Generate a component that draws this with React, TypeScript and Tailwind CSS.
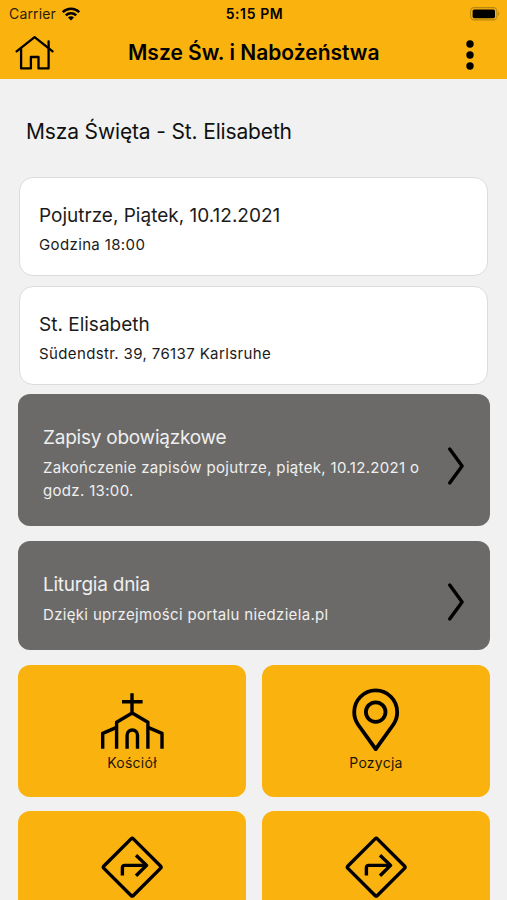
import type { ReactNode } from "react"

function WifiIcon() {
  return (
    <svg width="18" height="14" viewBox="0 0 18 14" fill="none" stroke="#000" strokeWidth="2.5">
      <path d="M.8 5.2a11.6 11.6 0 0 1 16.4 0" />
      <path d="M3.8 8.4a7.4 7.4 0 0 1 10.4 0" />
      <path d="M9 13.4 6 10.5a4.2 4.2 0 0 1 6 0Z" fill="#000" stroke="none" />
    </svg>
  )
}

function BatteryIcon() {
  return (
    <svg width="30" height="14" viewBox="0 0 30 14">
      <rect x="0.6" y="0.6" width="26.3" height="12.3" rx="3.6" fill="none" stroke="#b88813" strokeWidth="1.1" />
      <rect x="2.6" y="2.4" width="22.4" height="8.8" rx="1.6" fill="#000" />
      <path d="M28.1 4.6c1.6.8 1.6 3.6 0 4.4Z" fill="#b88813" />
    </svg>
  )
}

function HomeIcon() {
  return (
    <svg
      width="40"
      height="36"
      viewBox="0 0 40 36"
      fill="none"
      stroke="#000"
      strokeWidth="2.3"
      strokeLinecap="round"
      strokeLinejoin="round"
    >
      <path d="M2.6 16.3 20.6 2.2l18 14.1" />
      <path d="M7.1 13.6v19.8h9.8V22h7.6v11.4h10.1V6.3" />
    </svg>
  )
}

function ChurchIcon() {
  return (
    <svg width="64" height="58" viewBox="0 0 64 58" fill="none" stroke="#000" strokeWidth="3.4" strokeLinejoin="round">
      <path d="M32 2.2v20M22 10.7h20.6" />
      <path d="M16.6 57.7V31.2L32.2 22l15.7 9.2v26.5" />
      <path d="M2.7 57.7V42.4l13.9-6M62 57.7V42.4l-14.1-6" />
      <path d="M27.1 57.7V44.2a5.2 5.2 0 0 1 10.4 0v13.5" />
    </svg>
  )
}

function PinIcon() {
  return (
    <svg width="52" height="65" viewBox="0 0 52 65" fill="none" stroke="#000" strokeWidth="3.8" strokeLinejoin="round">
      <path d="M25.7 62.1 8 37.5C5.5 34 4.2 29.6 4.2 25.1a21.5 21.7 0 0 1 43 0c0 4.5-1.3 8.9-3.8 12.4Z" />
      <circle cx="25.7" cy="25.1" r="9.8" />
    </svg>
  )
}

function DirectionIcon() {
  return (
    <svg
      className="mt-px"
      width="64"
      height="64"
      viewBox="0 0 64 64"
      fill="none"
      stroke="#000"
      strokeWidth="3.4"
      strokeLinejoin="round"
    >
      <rect x="11.4" y="11.4" width="41.6" height="41.6" rx="1.6" transform="rotate(45 32.2 32.2)" />
      <path d="M22.4 40.4v-7.6c0-1.6.8-2.4 2.4-2.4h21.6" />
      <path d="m36 20.2 10.6 10.2L36 40.8" />
    </svg>
  )
}

function ChevronIcon() {
  return (
    <svg
      className="mt-[6px]"
      width="18"
      height="40"
      viewBox="0 0 18 40"
      fill="none"
      stroke="#000"
      strokeWidth="3.4"
      strokeLinecap="round"
      strokeLinejoin="round"
    >
      <path d="m2.7 3 12.4 17L2.7 37" />
    </svg>
  )
}

function InfoCard({ title, text }: { title: string; text: string }) {
  return (
    <div className="mx-[19px] h-[99px] rounded-[14px] border border-[#dcdcdc] bg-white pl-[19px] pt-[23px] text-[#1b1b1b]">
      <div className="text-[19px] leading-[29px]">{title}</div>
      <div className="mt-1 text-[15px] leading-[22px] tracking-[0.37px]">{text}</div>
    </div>
  )
}

function LinkCard({ title, children }: { title: string; children: ReactNode }) {
  return (
    <button className="flex items-center justify-between rounded-[12px] bg-[#6b6a68] pb-6 pl-[25px] pr-[25px] pt-[30px] text-left text-[#efefef]">
      <div>
        <div className="text-[19px] leading-[28px] tracking-[-0.24px]">{title}</div>
        <div className="mt-1 text-[15px] leading-[23px] tracking-[0.33px]">{children}</div>
      </div>
      <ChevronIcon />
    </button>
  )
}

function Tile({ icon, label }: { icon: ReactNode; label?: string }) {
  return (
    <button className="flex h-[132px] flex-col items-center rounded-[12px] bg-[#fab20f] pt-[22.5px] text-[14px] tracking-[0.25px] text-[#1d1604]">
      <div className="flex h-[65px] items-start justify-center">{icon}</div>
      {label && <div className="leading-[21px]">{label}</div>}
    </button>
  )
}

export default function App() {
  return (
    <main className="h-[900px] w-[507px] overflow-hidden bg-[#f1f1f1] font-[Inter,'Liberation_Sans',sans-serif]">
      <header className="h-[79px] bg-[#fab20f] text-black">
        {/* status bar */}
        <div className="grid h-[27px] grid-cols-3 items-center pl-[9px] pr-[7px] text-[14px]">
          <div className="flex items-center gap-[6px]">
            <span className="tracking-[0.15px] text-[#2b2006]">Carrier</span>
            <WifiIcon />
          </div>
          <div className="text-center font-semibold tracking-[0.6px]">5:15 PM</div>
          <div className="flex justify-end">
            <BatteryIcon />
          </div>
        </div>

        <div className="flex h-[52px] items-center pl-[14px] pr-[33px]">
          <HomeIcon />
          <h1 className="ml-[74px] flex-1 whitespace-nowrap text-[21px] font-semibold">Msze Św. i Nabożeństwa</h1>
          <svg className="mt-1" width="8" height="30" viewBox="0 0 8 30">
            <circle cx="4" cy="4" r="3.7" />
            <circle cx="4" cy="15" r="3.7" />
            <circle cx="4" cy="26" r="3.7" />
          </svg>
        </div>
      </header>

      <h2 className="mb-[29px] ml-[26px] mt-[37px] text-[21px] leading-[32px] tracking-[-0.15px] text-[#111]">
        Msza Święta - St. Elisabeth
      </h2>

      <div className="flex flex-col gap-[10px]">
        <InfoCard title="Pojutrze, Piątek, 10.12.2021" text="Godzina 18:00" />
        <InfoCard title="St. Elisabeth" text="Südendstr. 39, 76137 Karlsruhe" />
      </div>

      <div className="ml-[18px] mr-[17px] mt-[9px] flex flex-col gap-[15px]">
        <LinkCard title="Zapisy obowiązkowe">
          Zakończenie zapisów pojutrze, piątek, 10.12.2021 o
          <br />
          godz. 13:00.
        </LinkCard>
        <LinkCard title="Liturgia dnia">Dzięki uprzejmości portalu niedziela.pl</LinkCard>

        <div className="-mt-[0.5px] grid grid-cols-[228px_228px] justify-between gap-y-[14.5px]">
          <Tile
            icon={
              <div className="pt-1">
                <ChurchIcon />
              </div>
            }
            label="Kościół"
          />
          <Tile icon={<PinIcon />} label="Pozycja" />
          <Tile icon={<DirectionIcon />} />
          <Tile icon={<DirectionIcon />} />
        </div>
      </div>
    </main>
  )
}
